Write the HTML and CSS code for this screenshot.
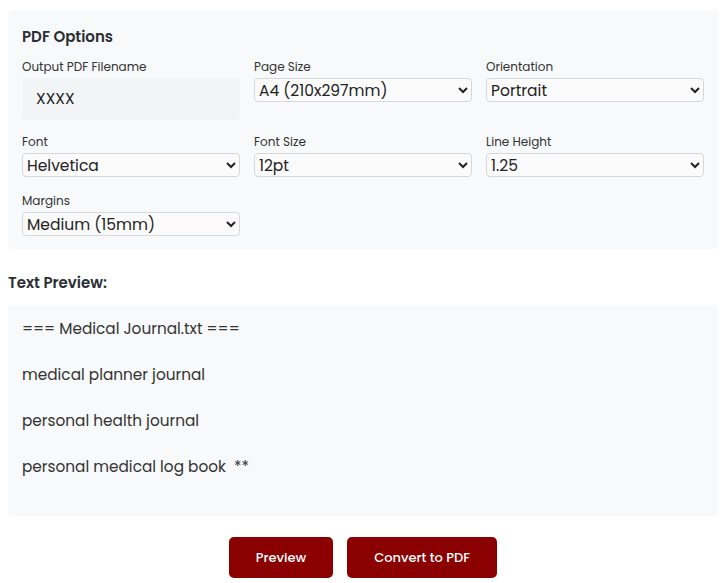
FILE: index.html
```
<!DOCTYPE html>
<html>
<head>
<meta charset="utf-8">
<link rel="stylesheet" href="styles.css">
</head>
<body>
<div class="page">
  <section class="options">
    <h2 class="title">PDF Options</h2>
    <div class="grid">
      <div class="field">
        <label class="label">Output PDF Filename</label>
        <input class="text-input" type="text" value="XXXX">
      </div>
      <div class="field">
        <label class="label">Page Size</label>
        <select class="select"><option>A4 (210x297mm)</option></select>
      </div>
      <div class="field">
        <label class="label">Orientation</label>
        <select class="select"><option>Portrait</option></select>
      </div>
      <div class="field">
        <label class="label">Font</label>
        <select class="select"><option>Helvetica</option></select>
      </div>
      <div class="field">
        <label class="label">Font Size</label>
        <select class="select"><option>12pt</option></select>
      </div>
      <div class="field">
        <label class="label">Line Height</label>
        <select class="select"><option>1.25</option></select>
      </div>
      <div class="field">
        <label class="label">Margins</label>
        <select class="select"><option>Medium (15mm)</option></select>
      </div>
    </div>
  </section>
  <h3 class="preview-title">Text Preview:</h3>
  <div class="preview">=== Medical Journal.txt ===

medical planner journal

personal health journal

personal medical log book  **</div>
  <div class="actions">
    <button class="btn btn-preview">Preview</button>
    <button class="btn btn-convert">Convert to PDF</button>
  </div>
</div>
</body>
</html>
```
FILE: styles.css
```
* { box-sizing: border-box; }
body {
  margin: 0;
  background: #fff;
  font-family: "Poppins", "Open Sans", "DejaVu Sans", sans-serif;
  color: #333;
}
.page {
  padding: 10px 10px 0 8px;
}
.options {
  background: #f8f9fa;
  border-radius: 4px;
  padding: 14px 14px 13px 14px;
}
.title {
  margin: 2px 0 11px 0;
  font-size: 15px;
  font-weight: 600;
  line-height: 22px;
  color: #2b2f36;
}
.grid {
  display: grid;
  grid-template-columns: repeat(3, 218px);
  column-gap: 14px;
  row-gap: 16px;
}
.field {
  display: flex;
  flex-direction: column;
}
.label {
  font-size: 12px;
  line-height: 16px;
  margin-bottom: 3px;
  color: #333;
}
.text-input {
  height: 40px;
  border: none;
  background: #f3f4f6;
  border-radius: 3px;
  padding: 0 14px;
  font: inherit;
  font-size: 15.5px;
  color: #222;
  box-shadow: 0 1px 1px rgba(0,0,0,0.04);
}
.select {
  height: 24px;
  border: 1px solid #d6d8db;
  border-radius: 4px;
  background: #fbfbfc;
  font: inherit;
  font-size: 15.5px;
  color: #222;
  padding: 0;
}
.preview-title {
  margin: 23px 0 11px 0;
  font-size: 15px;
  font-weight: 600;
  line-height: 22px;
  color: #2b2f36;
}
.preview {
  background: #f8f9fa;
  border-radius: 4px;
  padding: 12px 14px 38px 14px;
  white-space: pre-wrap;
  font-size: 15.3px;
  line-height: 23px;
  color: #333;
}
.actions {
  display: flex;
  justify-content: center;
  gap: 14px;
  margin-top: 21px;
}
.btn {
  height: 41px;
  border: none;
  border-radius: 5px;
  background: #8b0000;
  color: #fff;
  font: inherit;
  font-size: 13px;
  font-weight: 500;
  cursor: pointer;
}
.btn-preview { width: 104px; }
.btn-convert { width: 150px; }
```
